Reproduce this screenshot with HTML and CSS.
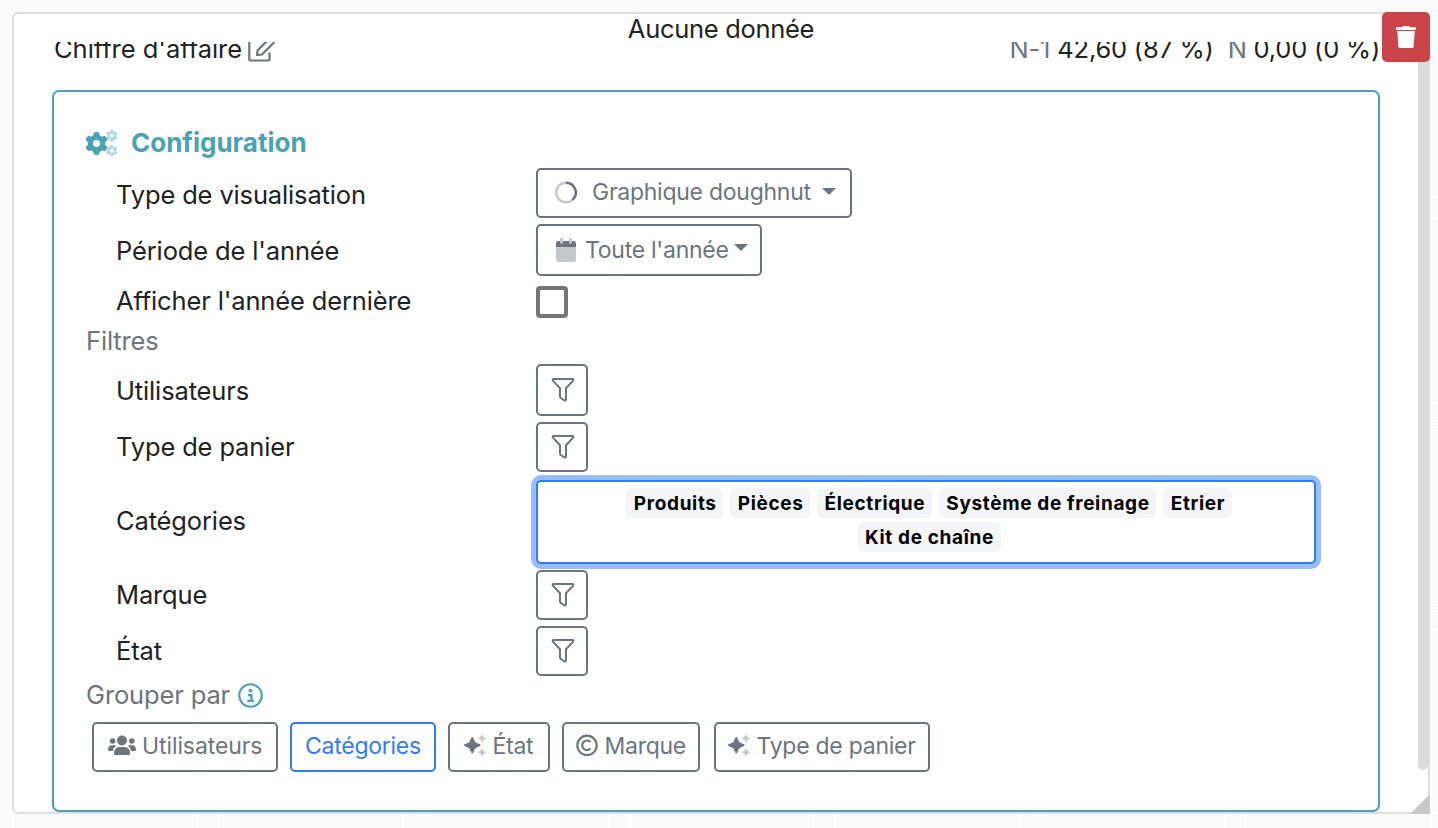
FILE: index.html
```
<!DOCTYPE html>
<html lang="fr">
<head>
<meta charset="utf-8">
<title>Configuration</title>
<link rel="stylesheet" href="styles.css">
</head>
<body>
<svg class="defs" aria-hidden="true">
  <symbol id="filter" viewBox="0 0 24 26"><path d="M2.600 2.900H21.400Q22.900 3.100 22.100 4.600L15 12.200V23.400Q14.800 25 13.400 24.300L9.800 22Q9 21.400 9 20.400V12.200L1.900 4.600Q1.100 3.100 2.600 2.900Z" fill="none" stroke="currentColor" stroke-width="2" stroke-linejoin="round"/></symbol>
  <symbol id="sparkles" viewBox="0 0 24 24"><path d="M9.300 3Q9.900 3 10.200 3.700L12.300 8.200L17 10.300Q17.600 10.600 17.600 11.200T17 12.100L12.300 14.200L10.200 18.700Q9.900 19.400 9.300 19.400T8.400 18.700L6.300 14.200L1.600 12.100Q1 11.800 1 11.200T1.600 10.300L6.300 8.200L8.400 3.700Q8.700 3 9.300 3Z" fill="currentColor"/><path d="M19 .6L20.300 3.100L22.800 4.400L20.300 5.700L19 8.200L17.700 5.700L15.200 4.400L17.700 3.100ZM19 14.400L20.300 16.900L22.800 18.200L20.300 19.500L19 22L17.700 19.500L15.200 18.200L17.700 16.900Z" fill="currentColor" stroke="currentColor" stroke-width=".6" stroke-linejoin="round" opacity=".4"/></symbol>
  <symbol id="gear" viewBox="-12 -12 24 24">
    <circle r="6.200" fill="none" stroke="currentColor" stroke-width="5"/>
    <g fill="currentColor"><path id="tooth" d="M-2.600-11Q0-11.900 2.600-11L3.400-7.200H-3.400Z"/><use href="#tooth" transform="rotate(60)"/><use href="#tooth" transform="rotate(120)"/><use href="#tooth" transform="rotate(180)"/><use href="#tooth" transform="rotate(240)"/><use href="#tooth" transform="rotate(300)"/></g>
  </symbol>
</svg>
<div class="cells"></div>
<main class="card">
  <header class="card-title"><span>Aucune donnée</span></header>
  <div class="scroll">
    <div class="summary">
      <span class="name">Chiffre d'affaire</span>
      <svg class="edit" viewBox="0 0 28 28"><g fill="none" stroke="currentColor" stroke-width="2.200"><path d="M12 5H3Q1.300 5 1.300 6.500V24Q1.300 25.500 3 25.500H20Q21.500 25.500 21.500 24V17.500"/><path d="M9.500 15.500L21.500 3.500Q23 2.500 24.500 4L25.500 5Q26.800 6.500 25.500 8L14 19.500L9 20.200Z" stroke-linejoin="round"/></g></svg>
      <span class="values"><span class="muted">N-1</span> 42,60 (87 %)&nbsp; <span class="muted">N</span> 0,00 (0 %)</span>
    </div>
    <section class="panel">
      <h2 class="heading"><svg class="gears" viewBox="0 0 34 28"><use href="#gear" x="-.500" y="3" width="24" height="24"/><g opacity=".4"><use href="#gear" x="20.500" y="1" width="12.500" height="12.500"/><use href="#gear" x="20.500" y="16" width="12.500" height="12.500"/></g></svg><span>Configuration</span></h2>
      <div class="row r56"><span class="label h54">Type de visualisation</span>
        <button class="btn select chart"><svg class="ring" viewBox="0 0 24 24"><g fill="none" stroke="currentColor" stroke-width="2.400"><circle cx="12" cy="12.500" r="9.800" opacity=".4"/><path d="M12 2.700A9.800 9.800 0 0 1 18.500 19.800"/></g></svg><span>Graphique doughnut</span><i class="caret"></i></button></div>
      <div class="row r62"><span class="label h54">Période de l'année</span>
        <button class="btn select period"><svg class="cal" viewBox="0 0 20 24"><path d="M0 9H20V21.500Q20 24 17.500 24H2.500Q0 24 0 21.500ZM4 0H7V6H4ZM13 0H16V6H13Z" fill="currentColor" opacity=".4"/><path d="M0 9V5.500Q0 3 2.500 3H4V5.500H7V3H13V5.500H16V3H17.500Q20 3 20 5.500V9Z" fill="currentColor"/></svg><span>Toute l'année</span><i class="caret"></i></button></div>
      <div class="row r40"><span class="label h30">Afficher l'année dernière</span><span class="check" role="checkbox" aria-checked="false"></span></div>
      <h3 class="sub r38">Filtres</h3>
      <div class="row r58"><span class="label h54">Utilisateurs</span><button class="btn square h52"><svg class="funnel"><use href="#filter"/></svg></button></div>
      <div class="row r58"><span class="label h50">Type de panier</span><button class="btn square"><svg class="funnel"><use href="#filter"/></svg></button></div>
      <div class="row r90"><span class="label h82">Catégories</span>
        <div class="tags"><div class="tag-line"><b>Produits</b><b>Pièces</b><b>Électrique</b><b>Système de freinage</b><b>Etrier</b></div><div class="tag-line"><b>Kit de chaîne</b></div></div></div>
      <div class="row r56"><span class="label h50">Marque</span><button class="btn square"><svg class="funnel"><use href="#filter"/></svg></button></div>
      <div class="row r54"><span class="label h50">État</span><button class="btn square"><svg class="funnel"><use href="#filter"/></svg></button></div>
      <h3 class="sub r42"><span>Grouper par</span><svg class="info" viewBox="0 0 24 24"><circle cx="12" cy="12" r="10.800" fill="none" stroke="currentColor" stroke-width="2"/><circle cx="12" cy="7.300" r="1.900" fill="currentColor"/><path d="M9.500 11.600H12.900V17M9 17.200H15.200" fill="none" stroke="currentColor" stroke-width="2.200"/></svg></h3>
      <div class="groups">
        <button class="btn g-users"><svg class="users" viewBox="0 0 28 22" fill="currentColor"><circle cx="14" cy="5.500" r="4.900"/><circle cx="4.600" cy="6" r="2.800"/><circle cx="23.800" cy="6" r="2.800"/><path d="M6 18.500Q6 12 11.500 12H16.500Q22 12 22 18.500Q22 20 20.500 20H7.500Q6 20 6 18.500ZM0 15Q0 10.300 4 10.300H6.500Q7.600 10.300 8 11Q5 12.800 4.800 16.100H1Q0 16.100 0 15ZM28 15Q28 10.300 24 10.300H21.500Q20.400 10.300 20 11Q23 12.800 23.200 16.100H27Q28 16.100 28 15Z"/></svg><span>Utilisateurs</span></button>
        <button class="btn active g-cat"><span>Catégories</span></button>
        <button class="btn g-state"><svg class="ico"><use href="#sparkles"/></svg><span>État</span></button>
        <button class="btn g-brand"><svg class="ico" viewBox="0 0 24 24" fill="none" stroke="currentColor" stroke-width="2.200"><circle cx="12" cy="11.300" r="9.700"/><path d="M15.500 8A4.800 4.800 0 1 0 15.500 14.600"/></svg><span>Marque</span></button>
        <button class="btn g-type"><svg class="ico"><use href="#sparkles"/></svg><span>Type de panier</span></button>
      </div>
    </section>
  </div>
  <i class="thumb"></i>
  <svg class="grip" viewBox="0 0 20 20"><path d="M20 0V20H0Z" fill="#c8c8c8"/></svg>
  <button class="delete" aria-label="Supprimer"><svg viewBox="0 0 20 22" fill="#fff"><path d="M0 1.300H6L7 0H13L14 1.300H20V3.900H0ZM1.300 5H18.700L17.600 20.500Q17.500 22 16 22H4Q2.500 22 2.400 20.500Z"/></svg></button>
</main>
</body>
</html>
```
FILE: styles.css
```
* { box-sizing: border-box; }
body { margin: 0; width: 1438px; height: 828px; overflow: hidden; position: relative; background: #fafafa; color: #212224; font-family: Inter, "Liberation Sans", sans-serif; font-size: 25.500px; letter-spacing: -.14px; }
.defs { position: absolute; width: 0; height: 0; }
.cells {
  position: absolute; left: 12px; top: 12px; width: 1426px; height: 816px;
  background:
    repeating-linear-gradient(90deg, #fff 0 2px, transparent 2px 185px, #fff 185px 187px, transparent 187px 205.500px),
    repeating-linear-gradient(180deg, #fff 0 2px, transparent 2px 184px, #fff 184px 186px, transparent 186px 205.500px);
}
.card { position: relative; width: 1418px; height: 802px; margin: 12px 0 0 12px; border: 2px solid #ddd; border-radius: 6px; background: #fff; }
.card-title { height: 28px; line-height: 30px; text-align: center; letter-spacing: -.3px; white-space: nowrap; }
.scroll { height: 770px; overflow: hidden; padding-left: 38px; }
.summary { height: 48px; display: flex; width: 1328px; line-height: 30px; margin-top: -8px; padding-left: 2px; white-space: nowrap; }
.name { width: 194px; letter-spacing: -.03px; }
.edit { width: 28px; height: 28px; margin-top: 1px; color: #6c757d; }
.values { margin-left: auto; letter-spacing: -.2px; }
.muted { color: #6c757d; }
.panel { position: relative; width: 1328px; height: 722px; margin-top: 8px; border: 2px solid #4aa0b5; border-radius: 7px; padding: 36px 32px 0 31px; }
.heading { margin: 0; height: 40px; display: flex; align-items: flex-start; color: #4aa0b5; font-size: 26px; font-weight: 700; line-height: 30px; letter-spacing: 0; }
.gears { width: 34px; height: 29px; margin-right: 12px; }
.row { display: grid; grid-template-columns: 420px 1fr; align-items: start; padding-left: 31px; }
.label { display: flex; align-items: center; padding-bottom: 2px; white-space: nowrap; }
.sub { margin: 0; display: flex; align-items: flex-start; padding-left: 1px; font-size: 25.500px; line-height: 30px; font-weight: 400; color: #6c757d; }
.r38 { height: 38px; }
.r40 { height: 40px; }
.r42 { height: 42px; }
.r54 { height: 54px; }
.r56 { height: 56px; }
.r58 { height: 58px; }
.r62 { height: 62px; }
.r90 { height: 90px; }
.h30 { height: 30px; }
.h50 { height: 50px; }
.h54 { height: 54px; }
.h82 { height: 82px; }
.btn { height: 50px; display: flex; align-items: center; border: 2px solid #6c757d; border-radius: 5px; background: #fff; color: #6c757d; font: 400 23px Inter, "Liberation Sans", sans-serif; letter-spacing: -.26px; padding: 0 0 2px; white-space: nowrap; }
.btn.h52 { height: 52px; }
.square { width: 52px; justify-content: center; padding-left: 2px; }
.funnel { width: 24px; height: 26px; }
.select { padding-left: 16px; }
.chart { width: 316px; }
.period { width: 226px; height: 52px; padding-bottom: 0; }
.ring { width: 24px; height: 24px; margin-right: 14px; }
.cal { flex: none; width: 20px; height: 24px; margin: 0 9px 0 2px; }
.caret { border: 7px solid transparent; border-top-color: currentColor; border-bottom: 0; margin: 0 0 2px auto; }
.chart .caret { margin-right: 14px; }
.period .caret { margin: 0 12px 6px auto; }
.check { width: 32px; height: 32px; border: 4px solid #767676; border-radius: 4px; }
.tags { width: 780px; height: 84px; padding-top: 6px; border: 2px solid #2f7bf6; border-radius: 5px; box-shadow: 0 0 0 5px #97bdfb; background: #fff; }
.tag-line { display: flex; justify-content: center; gap: 7px; height: 30px; margin-bottom: 4px; padding-left: 6px; }
.tags b { padding: 1px 6.500px 0 7.500px; border-radius: 6px; background: #f4f5f7; color: #000; font-size: 19px; line-height: 29px; letter-spacing: .65px; white-space: nowrap; }
.info { width: 25px; height: 25px; margin: 3px 0 0 8px; color: #4aa0b5; }
.groups { display: flex; padding-left: 7px; }
.g-users { width: 186px; margin-right: 12px; padding-left: 14px; }
.g-users span { letter-spacing: -.1px; }
.g-cat { width: 146px; margin-right: 12px; padding-left: 13px; }
.g-state { width: 102px; margin-right: 12px; padding-left: 13px; }
.g-brand { width: 138px; margin-right: 14px; padding-left: 11px; }
.g-type { width: 216px; padding-left: 11px; }
.btn.active { color: #2f7bf6; border-color: #2f7bf6; }
.users { width: 28px; height: 22px; margin-right: 6px; }
.ico { width: 24px; height: 24px; margin-right: 5.500px; }
.thumb { position: absolute; right: 0; top: 40px; width: 10px; height: 716px; border-radius: 5px; background: #dcdcdc; }
.grip { position: absolute; right: -2px; bottom: -2px; width: 20px; height: 20px; }
.delete { position: absolute; right: -2px; top: -2px; width: 48px; height: 50px; padding: 0; border: 0; border-radius: 5px; background: #cb444a; display: flex; align-items: center; justify-content: center; }
.delete svg { width: 20px; height: 22px; }
```
